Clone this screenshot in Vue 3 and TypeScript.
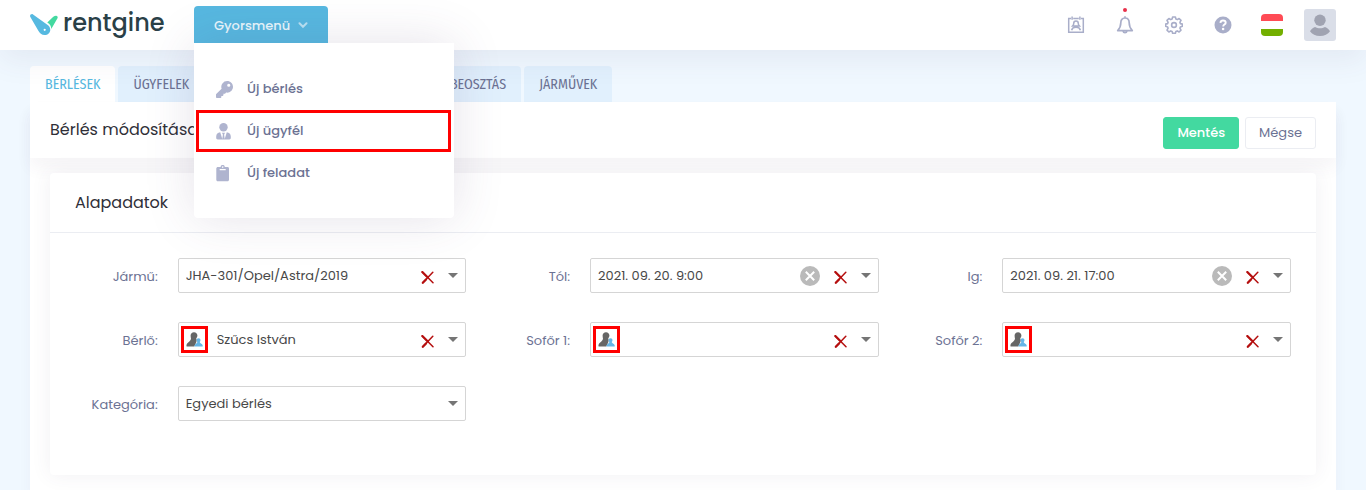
<script setup lang="ts">
import { ref } from 'vue'

interface Field {
  id: string
  label: string
  value: string
  kind: 'combo' | 'date' | 'person' | 'select'
}

const tabs = [
  { name: 'BÉRLÉSEK', active: true, wide: false },
  { name: 'ÜGYFELEK', active: false, wide: false },
  { name: 'BEOSZTÁS', active: false, wide: true },
  { name: 'JÁRMŰVEK', active: false, wide: false },
]

const quickLinks = [
  { icon: 'key', text: 'Új bérlés', marked: false },
  { icon: 'user', text: 'Új ügyfél', marked: true },
  { icon: 'clipboard', text: 'Új feladat', marked: false },
]

const fields = ref<Field[]>([
  { id: 'vehicle', label: 'Jármű:', value: 'JHA-301/Opel/Astra/2019', kind: 'combo' },
  { id: 'from', label: 'Tól:', value: '2021. 09. 20. 9:00', kind: 'date' },
  { id: 'to', label: 'Ig:', value: '2021. 09. 21. 17:00', kind: 'date' },
  { id: 'renter', label: 'Bérlő:', value: 'Szűcs István', kind: 'person' },
  { id: 'driver1', label: 'Sofőr 1:', value: '', kind: 'person' },
  { id: 'driver2', label: 'Sofőr 2:', value: '', kind: 'person' },
  { id: 'category', label: 'Kategória:', value: 'Egyedi bérlés', kind: 'select' },
])

const menuOpen = ref(true)
</script>

<template>
  <div class="page">
    <header class="topbar">
      <a href="#" class="logo">
        <svg class="logo-mark" width="28" height="22" viewBox="0 0 28 22" aria-hidden="true">
          <path d="M23.300 2.700c1.200-.8 2.400-1 3.400-.8.900.2 1.200 1.100.9 2L21.300 15c0-2.600-1.400-4.900-4-6.500z" fill="#43d9a0" />
          <path d="M2.700.2C1.200-.2-.4 1 .2 2.700l8 13.700c1.300 2.700 3.600 4.600 6.400 4.600 3.300 0 5.700-2.300 5.700-5.300 0-2.300-1.200-4-3.300-5.300z" fill="#56b9e0" />
          <circle cx="14.700" cy="15.800" r="1.100" fill="#fff" />
        </svg>
        <span class="logo-text">rentgine</span>
      </a>

      <div class="quick">
        <button type="button" class="quick-button" :aria-expanded="menuOpen" @click="menuOpen = !menuOpen">
          Gyorsmenü
          <svg width="10" height="7" viewBox="0 0 10 7" aria-hidden="true">
            <path d="M1.500 1.300 5 4.800l3.500-3.500" fill="none" stroke="#b9e1f3" stroke-width="2" stroke-linecap="round" />
          </svg>
        </button>
        <nav v-if="menuOpen" class="quick-menu">
          <a v-for="link in quickLinks" :key="link.text" href="#" class="quick-link" :class="{ marked: link.marked }">
            <svg v-if="link.icon === 'key'" width="17" height="17" viewBox="0 0 512 512" aria-hidden="true">
              <path d="M512 176c0 97.200-78.800 176-176 176-11.200 0-22.200-1.100-32.800-3.100l-24 27A24 24 0 0 1 261.200 384H224v40c0 13.300-10.700 24-24 24h-40v40c0 13.300-10.700 24-24 24H24c-13.300 0-24-10.700-24-24v-78c0-6.400 2.500-12.500 7-17l161.800-161.800A176 176 0 0 1 336 0c97.400 0 176 78.600 176 176zM336 128a48 48 0 1 0 96 0 48 48 0 0 0-96 0z" />
            </svg>
            <svg v-else-if="link.icon === 'user'" width="17" height="17" viewBox="0 0 17 17" aria-hidden="true">
              <circle cx="7.500" cy="4.200" r="4.200" />
              <path d="M4.200 9.300 6.300 16l.6-4.200L6 9.800h3l-.9 2 .6 4.200 2.100-6.700c2.400.2 4 1.900 4 4.200v1.300c0 .9-.6 1.700-1.500 1.700H1.700c-.9 0-1.500-.8-1.500-1.700v-1.300c0-2.300 1.600-4 4-4.200z" />
            </svg>
            <svg v-else width="17" height="17" viewBox="0 0 17 17" aria-hidden="true">
              <path d="M2 2h2.600a2.100 2.100 0 0 1 4.200 0h2.700c.9 0 1.500.7 1.500 1.500v11.200c0 .8-.6 1.500-1.500 1.500H1.800c-.9 0-1.500-.7-1.500-1.500V3.500C.3 2.700 1 2 2 2zm1.700 2v1.200h6V4zM6.700 1.300a.8.8 0 1 0 0 1.600.8.8 0 0 0 0-1.600z" fill-rule="evenodd" />
            </svg>
            <span>{{ link.text }}</span>
          </a>
        </nav>
      </div>

      <div class="tools">
        <button type="button" class="tool" aria-label="Névjegyek">
          <svg width="18" height="18" viewBox="0 0 18 18" fill="none" stroke="#a9aec9" stroke-width="1.500" aria-hidden="true">
            <path d="M4 2.600H1.700v13.700h14.600V2.600H14M6.200 2.600h5.600M5.100.5v3.300M12.900.5v3.300" />
            <path d="M9 4.900c-1.500 0-2.300 1-2.300 2.500 0 1-.3 1.800-1 2.500h2.200v1M9 4.900c1.500 0 2.300 1 2.300 2.500 0 1 .3 1.800 1 2.500h-2.200v1M7.900 9.600c.7.500 1.500.5 2.200 0M4.600 14.200c.5-2 2.300-2.900 4.400-2.900s3.900.9 4.400 2.900" />
          </svg>
        </button>
        <button type="button" class="tool bell" aria-label="Értesítések">
          <svg width="18" height="18" viewBox="0 0 18 18" fill="none" stroke="#a9aec9" stroke-width="1.700" stroke-linejoin="round" aria-hidden="true">
            <path d="M9 2C6.200 2 4.800 4 4.800 6.800c0 3.600-1 5.600-3.100 7.800h14.600c-2.100-2.200-3.100-4.200-3.100-7.800C13.200 4 11.800 2 9 2zM9 .3V2M7.200 15.400c.2 1.700 3.400 1.700 3.600 0" />
          </svg>
        </button>
        <button type="button" class="tool" aria-label="Beállítások">
          <svg width="18" height="18" viewBox="0 0 18 18" fill="none" stroke="#a9aec9" stroke-width="1.600" stroke-linejoin="round" aria-hidden="true">
            <path d="M7.600 1h2.800l.5 2.100 1.300.5 1.900-1.100 1.900 1.900-1.100 1.900.5 1.300 2 .5v2.200l-2 .6-.5 1.300 1.100 1.900-1.900 1.900-1.900-1.100-1.300.5-.5 2H7.600l-.5-2-1.300-.5L3.900 16 2 14.100l1.100-1.900-.5-1.300-2-.6V8.100l2-.5.5-1.300L2 4.400l1.900-1.900 1.900 1.100 1.300-.5z" />
            <circle cx="9" cy="9" r="2.400" />
          </svg>
        </button>
        <button type="button" class="tool" aria-label="Súgó">
          <svg width="18" height="18" viewBox="0 0 18 18" aria-hidden="true">
            <circle cx="9" cy="9" r="8.500" fill="#a9aec9" />
            <path d="M6.400 6.800C6.600 5.300 7.500 4.500 9 4.500s2.700.8 2.700 2.200c0 1.900-2.500 1.900-2.500 3.700" fill="none" stroke="#fff" stroke-width="1.900" />
            <circle cx="9.100" cy="13" r="1.300" fill="#fff" />
          </svg>
        </button>
        <button type="button" class="tool" aria-label="Nyelv">
          <span class="flag"></span>
        </button>
        <button type="button" class="tool profile" aria-label="Profil">
          <svg width="32" height="32" viewBox="0 0 32 32" aria-hidden="true">
            <rect width="32" height="32" rx="3" fill="#dadee8" />
            <circle cx="16" cy="11.300" r="5.700" fill="#a0a3b1" />
            <path d="M6 22.300c1-2 2.800-3.500 5-4.300 3 1.800 7 1.800 10 0 2.200.8 4 2.300 5 4.300-2 3-5.700 4.800-10 4.800S8 25.300 6 22.300z" fill="#a0a3b1" />
          </svg>
        </button>
      </div>
    </header>

    <main class="content">
      <nav class="tabs">
        <a v-for="tab in tabs" :key="tab.name" href="#" class="tab" :class="{ active: tab.active, wide: tab.wide }">{{ tab.name }}</a>
      </nav>

      <section class="panel">
        <div class="panel-head">
          <h1>Bérlés módosítása</h1>
          <button type="submit" form="rental" class="action save">Mentés</button>
          <button type="button" class="action cancel">Mégse</button>
        </div>

        <form id="rental" class="card" @submit.prevent>
          <h2>Alapadatok</h2>
          <div class="fields">
            <div v-for="field in fields" :key="field.id" class="field">
              <label :for="field.id">{{ field.label }}</label>
              <div class="control">
                <template v-if="field.kind === 'select'">
                  <select :id="field.id" v-model="field.value">
                    <option>Egyedi bérlés</option>
                  </select>
                  <svg class="caret" width="10" height="5" viewBox="0 0 10 5" aria-hidden="true"><path d="M0 0h10L5 5z" fill="#757575" /></svg>
                </template>
                <template v-else>
                  <button v-if="field.kind === 'person'" type="button" class="person" aria-label="Ügyfél adatai">
                    <svg width="17" height="15" viewBox="0 0 17 15" aria-hidden="true">
                      <path d="M8 .2c2 0 3.400 1.300 3.400 3.200 0 1.200-.5 2-1.200 2.700.4 1.500.7 2.400.2 3.900L8.300 14.600H.6c-.6-1.700.4-3.700 2.200-4.700C4 9.200 4.600 8.300 5 6.800 4.800 6 4.600 4.700 4.600 3.600 4.600 1.600 6 .2 8 .2z" fill="#666" />
                      <path d="M12.500 6.300c1.300 0 2 .8 2 2 0 .8-.4 1.400-.8 1.800.1.900 1 1.200 2 1.800.8.500 1.200 1.500 1 2.700H8.500c-.1-1.200.4-2.200 1.200-2.700.9-.5 1.600-.9 1.700-1.800-.5-.4-.8-1-.8-1.800 0-1.200.7-2 1.900-2z" fill="#65b5e6" />
                    </svg>
                  </button>
                  <input :id="field.id" v-model="field.value" type="text" autocomplete="off" />
                  <button v-if="field.kind === 'date'" type="button" class="reset" aria-label="Időpont törlése">
                    <svg width="20" height="20" viewBox="0 0 20 20" aria-hidden="true">
                      <circle cx="10" cy="10" r="10" fill="#bababa" />
                      <path d="m5.800 5.800 8.400 8.400m0-8.400-8.400 8.400" stroke="#fff" stroke-width="2" />
                    </svg>
                  </button>
                  <button type="button" class="clear" aria-label="Törlés" @click="field.value = ''">
                    <svg width="13" height="13" viewBox="0 0 13 13" aria-hidden="true">
                      <path d="M1.600 1.200 12 11.800M11.800 1.200 1.800 11.800" fill="none" stroke="#b50f0f" stroke-width="1.500" stroke-linecap="round" />
                      <path d="m1.300 1 5 5M5 8.500l-3.200 3.300" fill="none" stroke="#b50f0f" stroke-width="2.200" stroke-linecap="round" />
                    </svg>
                  </button>
                  <button type="button" class="open" aria-label="Lista megnyitása">
                    <svg width="10" height="5" viewBox="0 0 10 5" aria-hidden="true"><path d="M0 0h10L5 5z" fill="#757575" /></svg>
                  </button>
                </template>
              </div>
            </div>
          </div>
        </form>
      </section>
    </main>
  </div>
</template>

<style>
body {
  margin: 0;
  background: #f0f8ff;
}
</style>

<style scoped>
.page {
  display: flex;
  flex-direction: column;
  min-height: 100vh;
  font-family: Poppins, Inter, "Open Sans", sans-serif;
  font-size: 13px;
  color: #6c7293;
}

.page *,
.page *::before,
.page *::after {
  box-sizing: border-box;
}

a {
  color: inherit;
  text-decoration: none;
}

button {
  padding: 0;
  border: 0;
  background: none;
  font: inherit;
  color: inherit;
  cursor: pointer;
}

svg {
  display: block;
  flex: none;
}

.topbar {
  position: relative;
  z-index: 2;
  display: flex;
  align-items: center;
  height: 50px;
  padding: 0 22px 0 30px;
  background: #fff;
  box-shadow: 0 10px 30px rgba(82, 63, 105, 0.08);
}

.logo {
  display: flex;
  align-items: center;
  gap: 5px;
  width: 164px;
}

.logo-text {
  margin-top: -4px;
  font-size: 24px;
  font-weight: 500;
  line-height: 40px;
  color: #2a4047;
}

.quick {
  position: relative;
  align-self: flex-end;
}

.quick-button {
  display: flex;
  align-items: center;
  justify-content: space-between;
  width: 134px;
  height: 37px;
  margin-bottom: 7px;
  padding: 2px 20px 0;
  border-radius: 4px 4px 0 0;
  background: #57b8e0;
  font-weight: 500;
  color: #e8f6fc;
}

.quick-menu {
  position: absolute;
  top: 37px;
  left: 0;
  width: 260px;
  padding: 25px 3px 24px 2px;
  border-radius: 0 0 4px 4px;
  background: #fff;
  box-shadow: 0 0 50px rgba(82, 63, 105, 0.15);
}

.quick-link {
  display: flex;
  align-items: center;
  gap: 14px;
  height: 42px;
  padding: 0 20px;
  font-weight: 500;
}

.quick-link svg {
  fill: #afb4cf;
}

.quick-link.marked {
  padding: 0 17px;
  border: 3px solid #f00;
}

.tools {
  display: flex;
  margin-left: auto;
}

.tool {
  position: relative;
  display: flex;
  align-items: center;
  justify-content: center;
  width: 49px;
  height: 50px;
}

.bell::after {
  content: "";
  position: absolute;
  top: 8px;
  left: 23px;
  width: 4px;
  height: 4px;
  border-radius: 50%;
  background: #e8304a;
}

.flag {
  width: 22px;
  height: 22px;
  border-radius: 4px;
  background: linear-gradient(#ff4b55 0 7px, #fff 7px 15px, #73af00 15px);
}

.profile {
  width: 48px;
}

.content {
  display: flex;
  flex: 1;
  flex-direction: column;
  padding: 16px 30px 0;
}

.tabs {
  display: flex;
  gap: 3px;
}

.tab {
  height: 36px;
  padding: 0 15px;
  border-radius: 4px 4px 0 0;
  background: #e1f0fd;
  font-family: "Fira Sans Condensed", "Roboto Condensed", Roboto, sans-serif;
  font-size: 14px;
  line-height: 38px;
}

.tab.active {
  background: #fff;
  color: #57b8e0;
}

.tab.wide {
  width: 314px;
  text-align: right;
}

.panel {
  flex: 1;
  padding-bottom: 15px;
  background: #fff;
  box-shadow: 0 10px 13px rgba(82, 63, 105, 0.04);
}

.panel-head {
  display: flex;
  align-items: center;
  gap: 6px;
  height: 56px;
  padding: 6px 20px 0;
  box-shadow: 0 10px 15px rgba(82, 63, 105, 0.05);
}

h1,
h2 {
  margin: 0;
  font-size: 16px;
  font-weight: 400;
  color: #2f2f38;
}

h1 {
  margin-right: auto;
  padding-bottom: 8px;
}

.action {
  height: 32px;
  padding: 0 13px;
  border: 1px solid #ebedf2;
  border-radius: 3px;
}

.save {
  border-color: #43d9a0;
  background: #43d9a0;
  font-weight: 500;
  color: #fff;
}

.card {
  min-height: 302px;
  margin: 15px 20px 0;
  border-radius: 4px;
  background: #fff;
  box-shadow: 0 0 20px rgba(82, 63, 105, 0.08);
}

h2 {
  height: 60px;
  padding: 0 25px;
  border-bottom: 1px solid #ebedf2;
  line-height: 59px;
}

.fields {
  display: grid;
  grid-template-columns: repeat(3, 1fr);
  row-gap: 29px;
  padding: 25px 25px 25px 4px;
}

.field {
  display: grid;
  grid-template-columns: 3fr 7fr;
  align-items: center;
}

.field label {
  padding: 3px 20px 0 0;
  text-align: right;
}

.control {
  position: relative;
  display: flex;
  align-items: center;
  height: 35px;
  min-width: 0;
  border: 1px solid #d5d5d5;
  border-radius: 2px;
}

input,
select {
  flex: 1;
  min-width: 0;
  height: 100%;
  padding: 0 7px;
  border: 0;
  outline: 0;
  background: none;
  font: inherit;
  color: #484848;
  appearance: none;
}

.person {
  display: flex;
  align-items: center;
  justify-content: center;
  width: 27px;
  height: 27px;
  margin: 0 2px;
  border: 3px solid #f00;
}

.reset {
  margin-right: 14px;
}

.clear {
  margin: 3px 14px 0 0;
}

.open {
  padding: 10px 7px 10px 0;
}

.caret {
  position: absolute;
  right: 7px;
  pointer-events: none;
}
</style>
